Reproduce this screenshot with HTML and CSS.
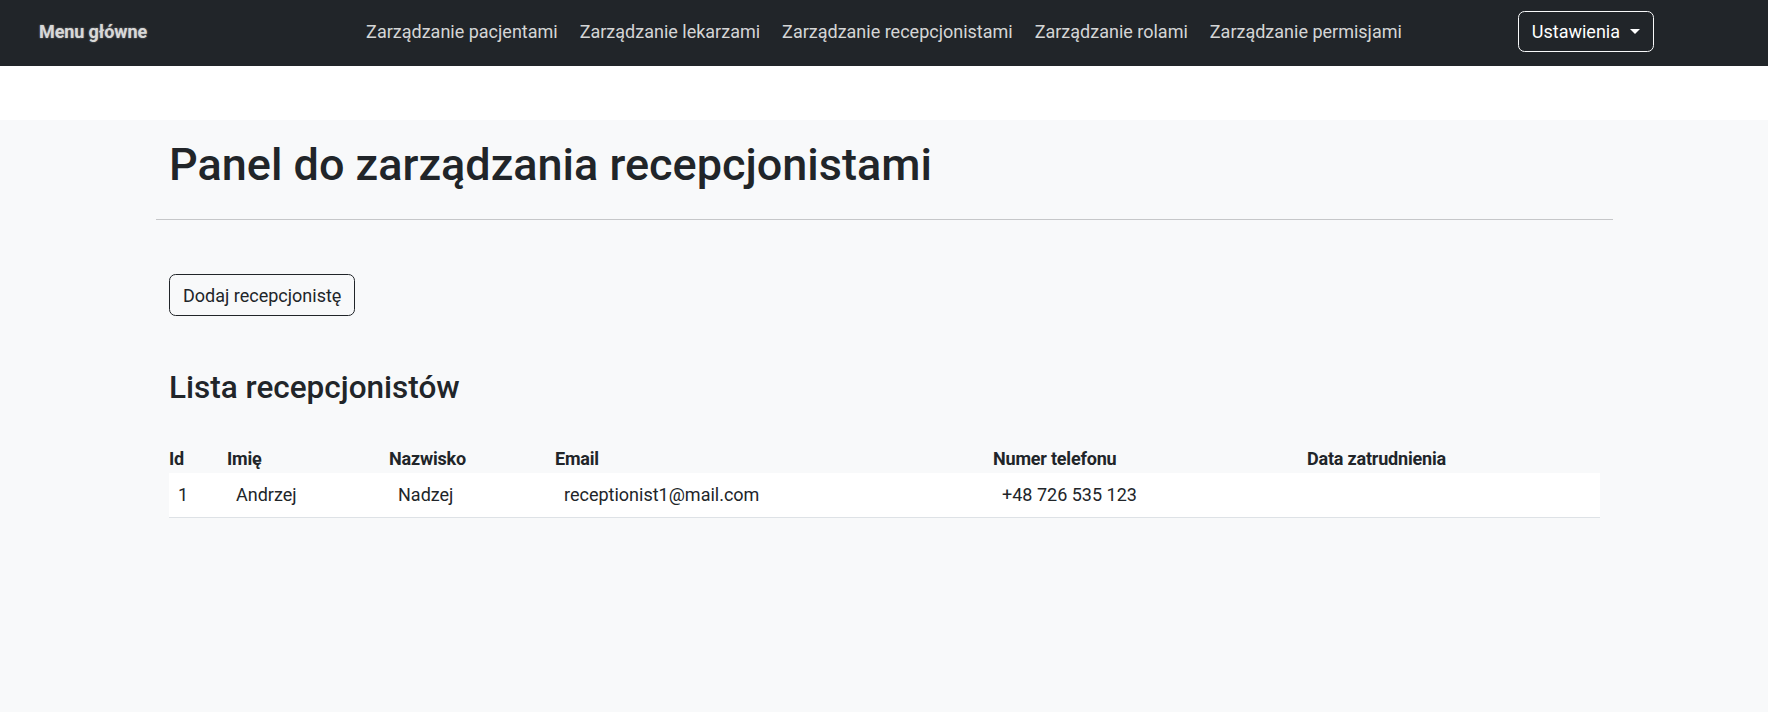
FILE: index.html
```html
<!DOCTYPE html>
<html lang="pl">
<head>
<meta charset="utf-8">
<title>Panel do zarządzania recepcjonistami</title>
<link rel="stylesheet" href="styles.css">
</head>
<body>
<nav class="navbar">
  <div class="nav-left"><a class="brand" href="#">Menu główne</a></div>
  <ul class="nav-links">
    <li><a href="#">Zarządzanie pacjentami</a></li>
    <li><a href="#">Zarządzanie lekarzami</a></li>
    <li><a href="#">Zarządzanie recepcjonistami</a></li>
    <li><a href="#">Zarządzanie rolami</a></li>
    <li><a href="#">Zarządzanie permisjami</a></li>
  </ul>
  <div class="nav-right">
    <button class="settings-btn" type="button">Ustawienia <span class="caret"></span></button>
  </div>
</nav>
<main class="main">
  <div class="container">
    <h1 class="title">Panel do zarządzania recepcjonistami</h1>
    <hr class="divider">
    <div class="section">
      <button class="add-btn" type="button">Dodaj recepcjonistę</button>
      <h2 class="subtitle">Lista recepcjonistów</h2>
      <table class="table">
        <thead>
          <tr>
            <th class="c-id">Id</th>
            <th class="c-name">Imię</th>
            <th class="c-surname">Nazwisko</th>
            <th class="c-email">Email</th>
            <th class="c-phone">Numer telefonu</th>
            <th class="c-date">Data zatrudnienia</th>
          </tr>
        </thead>
        <tbody>
          <tr>
            <td>1</td>
            <td>Andrzej</td>
            <td>Nadzej</td>
            <td>receptionist1@mail.com</td>
            <td>+48 726 535 123</td>
            <td></td>
          </tr>
        </tbody>
      </table>
    </div>
  </div>
</main>
</body>
</html>
```

FILE: styles.css
```css
* { box-sizing: border-box; }

html, body { height: 100%; }

body {
  margin: 0;
  font-family: Roboto, "Liberation Sans", sans-serif;
  font-size: 18px;
  line-height: 1.5;
  color: #212529;
  background: #fff;
  display: flex;
  flex-direction: column;
}

.navbar {
  background: #212529;
  height: 66px;
  padding-bottom: 3px;
  display: grid;
  grid-template-columns: 1fr auto 1fr;
  align-items: center;
  flex-shrink: 0;
}

.nav-left { padding-left: 39px; }

.brand {
  color: #d8d8d8;
  font-weight: 700;
  font-size: 18px;
  text-decoration: none;
  letter-spacing: -0.1px;
  text-shadow: 0 0 2px rgba(255, 255, 255, 0.45);
}

.nav-links {
  list-style: none;
  margin: 0;
  padding: 0;
  display: flex;
}

.nav-links a {
  display: block;
  padding: 0 11px;
  color: rgba(255, 255, 255, 0.82);
  text-decoration: none;
}

.nav-right {
  display: flex;
  justify-content: flex-end;
  padding-right: 114px;
}

.settings-btn {
  height: 41px;
  padding: 0 13px;
  border: 1px solid #f8f9fa;
  border-radius: 6.6px;
  background: transparent;
  color: #fff;
  font-family: inherit;
  font-size: 18px;
  display: flex;
  align-items: center;
  gap: 10px;
}

.caret {
  width: 0;
  height: 0;
  border-left: 5px solid transparent;
  border-right: 5px solid transparent;
  border-top: 5px solid #fff;
}

.main {
  flex: 1;
  margin-top: 54px;
  background: #f8f9fa;
  padding-top: 18px;
}

.container {
  width: 1458px;
  margin: 0 auto;
  padding-left: 1px;
}

.title {
  margin: 0;
  padding: 0 13px;
  font-size: 45px;
  font-weight: 500;
  line-height: 1.2;
}

.divider {
  margin: 27px 0 0;
  border: 0;
  border-top: 1px solid #c6c7c9;
}

.section {
  padding: 54px 13px 0;
}

.add-btn {
  display: block;
  height: 42px;
  padding: 0 13px;
  border: 1px solid #212529;
  border-radius: 6.6px;
  background: transparent;
  color: #212529;
  font-family: inherit;
  font-size: 18px;
}

.subtitle {
  margin: 53px 0 0;
  font-size: 31.5px;
  font-weight: 500;
  line-height: 1.2;
}

.table {
  margin-top: 38px;
  width: 1431px;
  border-collapse: collapse;
  table-layout: fixed;
}

.table th {
  text-align: left;
  font-weight: 700;
  padding: 0 0 1px;
  letter-spacing: -0.2px;
}

.table td {
  background: #fff;
  padding: 8.5px 8px 8.5px 9px;
  border-bottom: 1px solid #dee2e6;
}

.c-id { width: 58px; }
.c-name { width: 162px; }
.c-surname { width: 166px; }
.c-email { width: 438px; }
.c-phone { width: 314px; }
.c-date { width: auto; }
```
